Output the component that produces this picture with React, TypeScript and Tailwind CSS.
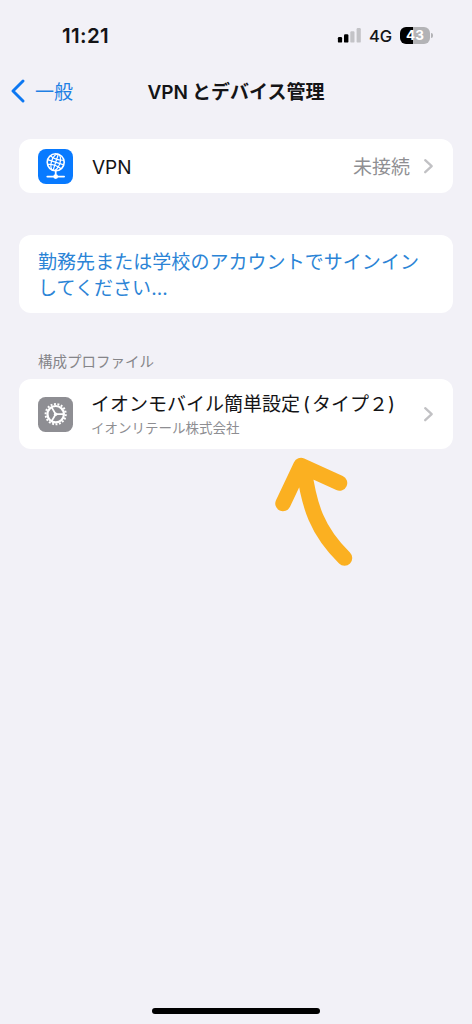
import type { ReactNode } from "react";

function Chevron() {
    return (
        <svg className="w-[11px] h-[17px] shrink-0" viewBox="0 0 11 17" fill="none">
            <path d="M2.2 2.2 8.7 8.2 2.2 14.2" stroke="#c1c1c4" strokeWidth="2.3" strokeLinecap="round" strokeLinejoin="round" />
        </svg>
    );
}

function StatusBar() {
    return (
        <div className="h-[62px] pt-[21px] pl-[62px] pr-[40px] flex items-start justify-between">
            <span className="pt-px text-[20.5px] leading-7 font-semibold tracking-[0.35px]">11:21</span>
            <div className="flex items-center h-7">
                <svg className="w-[24px] h-[16px]" viewBox="0 0 24 16">
                    <rect x="0.9" y="10" width="4.2" height="5.6" rx="1.2" />
                    <rect x="7" y="7.2" width="4.4" height="8.4" rx="1.2" />
                    <rect x="13.3" y="4.2" width="4.2" height="11.4" rx="1.2" fill="#c3c3c7" />
                    <rect x="19.6" y="1" width="4.2" height="14.6" rx="1.2" fill="#c3c3c7" />
                </svg>
                <span className="ml-[8px] pt-px w-[22px] whitespace-nowrap text-[16.5px] leading-7 font-medium tracking-[-0.1px]">4G</span>
                <div className="ml-[9px] w-[30px] h-[17px] rounded-[6px] bg-linear-to-r from-black from-43% to-[#b3b3b6] to-43% flex items-center justify-center text-[13.5px] leading-[17px] font-bold tracking-[0.2px] text-white">
                    43
                </div>
                <span className="ml-px -mr-px w-[2px] h-[5px] rounded-r-full bg-[#b3b3b6]" />
            </div>
        </div>
    );
}

function NavBar() {
    return (
        <div className="h-[58px] relative flex items-center justify-center">
            <div className="absolute left-[10px] inset-y-0 flex items-center text-[#1f80e4]">
                <svg className="w-[16px] h-[24px]" viewBox="0 0 16 24" fill="none">
                    <path d="M13 2 3 12l10 10" stroke="#0d78f2" strokeWidth="2.9" strokeLinecap="round" strokeLinejoin="round" />
                </svg>
                <span className="ml-[9px] pt-[3px] text-[19px] leading-7">一般</span>
            </div>
            <h1 className="pt-[3px] whitespace-nowrap text-[19px] leading-7 font-semibold">
                VPN<span className="ml-[4px]">とデバイス管理</span>
            </h1>
        </div>
    );
}

function Card({ className, children }: { className: string; children: ReactNode }) {
    return <section className={`ml-[19px] mr-[19px] bg-white rounded-[12px] ${className}`}>{children}</section>;
}

function VpnIcon() {
    return (
        <svg className="w-[35px] h-[35px] shrink-0" viewBox="0 0 35 35" fill="none" stroke="#fff">
            <rect width="35" height="35" rx="8" fill="#087aff" stroke="none" />
            <g strokeWidth="1.2">
                <circle cx="17.7" cy="13.3" r="8.5" strokeWidth="1.6" />
                <g transform="rotate(18 17.7 13.3)">
                    <ellipse cx="17.7" cy="13.3" rx="4.3" ry="8.5" />
                    <path d="M17.7 4.8v17M9.2 13.3h17M10.6 8.8c4.2 1.7 10 1.7 14.2 0M10.6 17.8c4.2-1.7 10-1.7 14.2 0" />
                </g>
            </g>
            <path d="M17.7 22v4" strokeWidth="1.8" />
            <path d="M9.3 27.6h16.8" strokeWidth="1.8" strokeLinecap="round" />
            <circle cx="17.7" cy="27.6" r="2.4" fill="#fff" stroke="none" />
        </svg>
    );
}

function GearIcon() {
    return (
        <svg className="w-[35px] h-[35px] shrink-0" viewBox="0 0 35 35" fill="none" stroke="#fff">
            <rect width="35" height="35" rx="7.5" fill="#8e8e93" stroke="none" />
            {/* teeth, rim, hub */}
            <circle cx="17.7" cy="17.2" r="10.1" strokeWidth="2" pathLength="36" strokeDasharray="1.1 0.9" />
            <circle cx="17.7" cy="17.2" r="8.2" strokeWidth="2.2" />
            <path d="M17.7 17.2h7.5M17.7 17.2l-4-6.8M17.7 17.2l-4 6.8" strokeWidth="1.7" />
            <circle cx="17.7" cy="17.2" r="1.8" fill="#fff" stroke="none" />
        </svg>
    );
}

export default function App() {
    return (
        <main className="relative w-[472px] h-[1024px] overflow-hidden flex flex-col bg-[#f2f1f7] text-[#141416] font-[Inter,'Noto_Sans_CJK_JP',sans-serif]">
            <StatusBar />
            <NavBar />

            <Card className="mt-[19px] h-[54px] pl-[19px] pr-[19px] flex items-center">
                <VpnIcon />
                <span className="ml-[19px] pt-[3px] text-[19px] leading-7">VPN</span>
                <span className="ml-auto mr-[13px] pt-[4px] text-[19px] leading-7 text-[#8f8f93]">未接続</span>
                <Chevron />
            </Card>

            <Card className="mt-[42px] h-[78px] pl-[19px] pt-[15px]">
                <p className="whitespace-nowrap text-[19px] leading-[26px] tracking-[0.05px] text-[#2b84d6]">
                    勤務先または学校のアカウントでサインイン
                    <br />
                    してください...
                </p>
            </Card>

            <h2 className="mt-[38px] ml-[38px] text-[14.5px] leading-[22px] text-[#858589]">構成プロファイル</h2>
            <Card className="mt-[6px] h-[70px] pl-[19px] pr-[19px] flex items-center">
                <GearIcon />
                <div className="ml-[18px] pt-px whitespace-nowrap">
                    <p className="text-[19px] leading-[26px]">
                        イオンモバイル簡単設定<span className="ml-[3px] mr-[2px]">(</span>タイプ２)
                    </p>
                    <p className="text-[13.5px] leading-[20px] text-[#8e8e92]">イオンリテール株式会社</p>
                </div>
                <span className="ml-auto flex">
                    <Chevron />
                </span>
            </Card>

            {/* hand-drawn pointer over the page */}
            <svg className="absolute left-[260px] top-[440px] w-[110px] h-[140px]" viewBox="0 0 110 140" fill="none">
                <path
                    d="M23 63.5 41 25.5 79.5 43M44 29C49 66 57 91 84.5 118"
                    stroke="#fbb021"
                    strokeWidth="15.5"
                    strokeLinecap="round"
                    strokeLinejoin="round"
                />
            </svg>

            <div className="mt-auto mb-[10px] ml-[152px] w-[168px] h-[6px] rounded-full bg-black" />
        </main>
    );
}
